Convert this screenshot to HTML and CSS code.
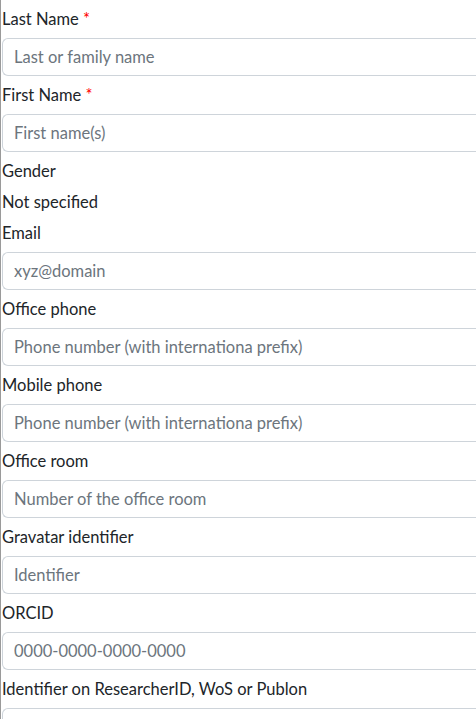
FILE: index.html
```html
<!DOCTYPE html>
<html lang="en">
<head>
<meta charset="utf-8">
<title>Person form</title>
<link rel="stylesheet" href="styles.css">
</head>
<body>
<div class="frame">
  <form class="person-form">
    <div class="field">
      <label class="form-label" for="last">Last Name <span class="req">*</span></label>
      <input class="form-control" id="last" type="text" placeholder="Last or family name">
    </div>
    <div class="field">
      <label class="form-label" for="first">First Name <span class="req">*</span></label>
      <input class="form-control" id="first" type="text" placeholder="First name(s)">
    </div>
    <div class="field">
      <label class="form-label">Gender</label>
      <div class="plain-value">Not specified</div>
    </div>
    <div class="field">
      <label class="form-label" for="email">Email</label>
      <input class="form-control" id="email" type="text" placeholder="xyz@domain">
    </div>
    <div class="field">
      <label class="form-label" for="ophone">Office phone</label>
      <input class="form-control" id="ophone" type="text" placeholder="Phone number (with internationa prefix)">
    </div>
    <div class="field">
      <label class="form-label" for="mphone">Mobile phone</label>
      <input class="form-control" id="mphone" type="text" placeholder="Phone number (with internationa prefix)">
    </div>
    <div class="field">
      <label class="form-label" for="room">Office room</label>
      <input class="form-control" id="room" type="text" placeholder="Number of the office room">
    </div>
    <div class="field">
      <label class="form-label" for="grav">Gravatar identifier</label>
      <input class="form-control" id="grav" type="text" placeholder="Identifier">
    </div>
    <div class="field">
      <label class="form-label" for="orcid">ORCID</label>
      <input class="form-control" id="orcid" type="text" placeholder="0000-0000-0000-0000">
    </div>
    <div class="field">
      <label class="form-label" for="rid">Identifier on ResearcherID, WoS or Publon</label>
      <input class="form-control" id="rid" type="text" placeholder="">
    </div>
  </form>
</div>
</body>
</html>
```
FILE: styles.css
```css
html, body {
  margin: 0;
  padding: 0;
  background: #fff;
}
body {
  font-family: Lato, "Noto Sans", sans-serif;
  font-size: 16.5px;
  line-height: 24px;
  color: #212529;
}
.frame {
  border-left: 1px solid #9a9a9a;
  padding-left: 1px;
  height: 719px;
  box-sizing: border-box;
  overflow: hidden;
}
.person-form {
  display: flex;
  flex-direction: column;
}
.field {
  display: flex;
  flex-direction: column;
}
.form-label {
  display: block;
  padding: 7px 0;
  line-height: 24px;
}
.req {
  color: #ff0000;
}
.plain-value {
  line-height: 24px;
}
.form-control {
  display: block;
  box-sizing: border-box;
  width: 100%;
  height: 38px;
  margin: 0;
  padding: 6px 12px 6px 11px;
  font: inherit;
  line-height: 24px;
  color: #212529;
  background: #fff;
  border: 1px solid #ced4da;
  border-right: 0;
  border-radius: 6px 0 0 6px;
  outline: none;
}
.form-control::placeholder {
  color: #6c757d;
  opacity: 1;
}
```
